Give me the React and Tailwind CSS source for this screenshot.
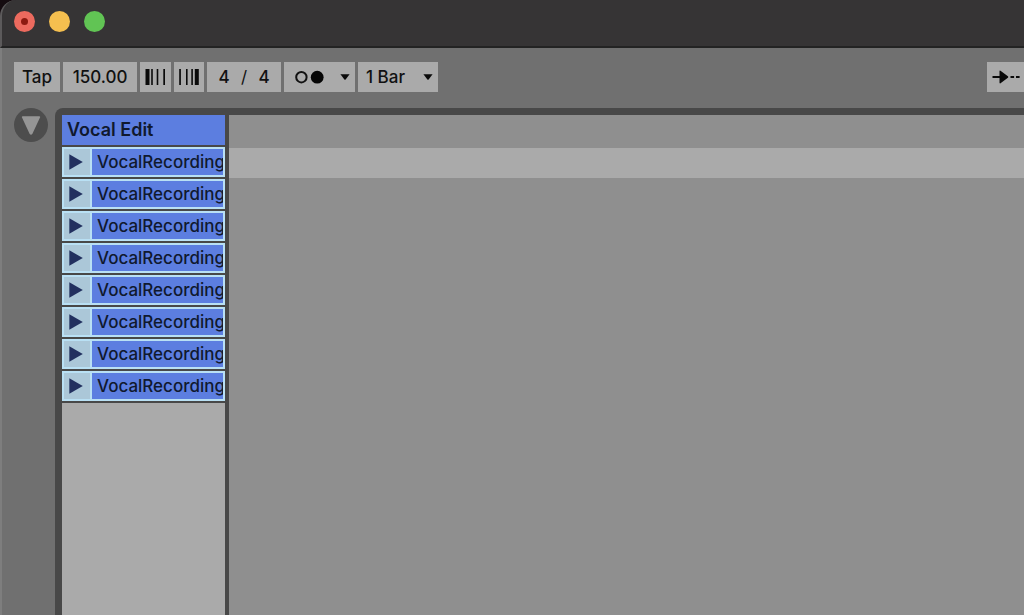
import React, { useState } from "react";

const clips = [1, 2, 3, 4, 5, 6, 7, 8];

const control =
  "h-[30px] shrink-0 bg-[#aaaaaa] text-[#111111] text-[17px] font-medium leading-[30px]";

function Caret() {
  return (
    <svg
      viewBox="0 0 10 6"
      className="pointer-events-none absolute right-[5px] top-3 h-[6px] w-[10px]"
      aria-hidden="true"
    >
      <path d="M0.4 0.2h9.2L5.6 5.4q-0.6 0.6-1.2 0z" fill="#0a0a0a" />
    </svg>
  );
}

function TitleBar() {
  return (
    <header className="flex h-12 shrink-0 items-center gap-[14px] rounded-tl-2xl border-b-2 border-l-2 border-b-[#232323] border-l-[#5c5a5b] bg-[#363435] pl-3 pb-1">
      <button aria-label="Close" className="size-[21px] rounded-full bg-[#ec6a5e] p-[7px]">
        <span className="block size-[7px] rounded-full bg-[#8c1a10]" />
      </button>
      <button aria-label="Minimize" className="size-[21px] rounded-full bg-[#f5bf4f]" />
      <button aria-label="Zoom" className="size-[21px] rounded-full bg-[#61c454]" />
    </header>
  );
}

function Toolbar() {
  const [tempo, setTempo] = useState("150.00");
  const [numerator, setNumerator] = useState("4");
  const [denominator, setDenominator] = useState("4");

  return (
    <div className="flex shrink-0 items-center justify-between pl-3 pt-[14px] pb-4">
      <div className="flex gap-[3px]">
        <button className={`${control} w-[46px]`}>Tap</button>
        <input
          aria-label="Tempo"
          value={tempo}
          onChange={(e) => setTempo(e.target.value)}
          className={`${control} w-[74px] text-center`}
        />

        {/* Nudge down / up */}
        <button aria-label="Nudge down" className={`${control} w-[31px]`}>
          <svg viewBox="0 0 31 30" className="h-[30px] w-[31px]" fill="#0a0a0a">
            <path d="M5.5 7h4v16h-4zM11.2 7h1.6v16h-1.6zM16.7 7h1.6v16h-1.6zM23.3 7h1.7v16h-1.7z" />
          </svg>
        </button>
        <button aria-label="Nudge up" className={`${control} w-[30px]`}>
          <svg viewBox="0 0 30 30" className="size-[30px]" fill="#0a0a0a">
            <path d="M5.2 7h1.7v16h-1.7zM12 7h1.6v16h-1.6zM17.3 7h1.6v16h-1.6zM20.8 7h4v16h-4z" />
          </svg>
        </button>

        {/* Time signature */}
        <div className={`${control} flex w-[74px] items-center justify-center`}>
          <input
            aria-label="Numerator"
            value={numerator}
            onChange={(e) => setNumerator(e.target.value)}
            className="w-5 text-center"
          />
          <span className="w-5 text-center font-normal">/</span>
          <input
            aria-label="Denominator"
            value={denominator}
            onChange={(e) => setDenominator(e.target.value)}
            className="w-5 text-center"
          />
        </div>

        {/* Metronome, its symbol sits over the select */}
        <div className="relative">
          <select
            aria-label="Metronome"
            className="h-[30px] w-[71px] appearance-none bg-[#aaaaaa] text-transparent"
          >
            <option>○●</option>
          </select>
          <svg
            viewBox="0 0 32 16"
            className="pointer-events-none absolute left-[10px] top-[7px] h-4 w-8"
            aria-hidden="true"
          >
            <circle cx="7.4" cy="8.2" r="5.2" fill="none" stroke="#111111" strokeWidth="2" />
            <circle cx="23.2" cy="8.2" r="6.4" fill="#050505" />
          </svg>
          <Caret />
        </div>
        <div className="relative">
          <select
            aria-label="Quantization"
            className={`${control} w-[80px] appearance-none pl-2`}
          >
            <option>1 Bar</option>
          </select>
          <Caret />
        </div>
      </div>

      <button aria-label="Follow" className={`${control} w-[37px]`}>
        <svg viewBox="0 0 37 30" className="h-[30px] w-[37px]" fill="#0a0a0a">
          <path d="M5.5 14h7V9.4q0-1.2 1-0.6l7.4 5.4q0.9 0.8 0 1.6l-7.4 5.4q-1 0.6-1-0.6V16h-7z" />
          <path d="M23.5 14h3.6v2h-3.6zM29 14h3.6v2H29z" />
        </svg>
      </button>
    </div>
  );
}

function Clip() {
  return (
    <li className="flex h-[30px] overflow-hidden border-2 border-[#b9e0f4] bg-[#5c7ee0]">
      <button
        aria-label="Launch clip"
        className="w-[28px] shrink-0 border-r-2 border-[#b9e0f4] bg-[#abc7d8] pl-[5px]"
      >
        <svg viewBox="0 0 14 16" className="h-4 w-[14px]">
          <path d="M0.3 0.3L13.8 8L0.3 15.7z" fill="#22305f" />
        </svg>
      </button>
      <span className="min-w-0 overflow-hidden pl-[5px] leading-[26px] whitespace-nowrap">
        VocalRecording
      </span>
    </li>
  );
}

function Track() {
  return (
    <section className="flex w-[163px] shrink-0 flex-col gap-[2px] text-[17px] font-medium text-[#10192e]">
      <h2 className="h-[30px] bg-[#5c7ee0] pl-[5px] text-[18px] font-semibold leading-[30px]">
        Vocal Edit
      </h2>
      <ul className="flex flex-col gap-[2px]">
        {clips.map((id) => (
          <Clip key={id} />
        ))}
      </ul>
      <div className="flex-1 bg-[#aaaaaa]" />
    </section>
  );
}

export default function App() {
  return (
    <div className="flex h-screen flex-col overflow-hidden bg-[#150c10] font-['Inter',sans-serif]">
      <TitleBar />
      <div className="flex min-h-0 flex-1 flex-col border-l-2 border-[#7e7e7e] bg-[#707070]">
        <Toolbar />
        <main className="flex min-h-0 flex-1">
          <div className="w-[53px] shrink-0 pl-3">
            <button
              aria-label="Show browser"
              className="flex size-[34px] items-center justify-center rounded-full bg-[#4d4d4d]"
            >
              <svg viewBox="0 0 20 20" className="size-5">
                <path
                  d="M1.8 1.2h16.4q1.4 0 0.8 1.4L11.3 19q-1.3 1.6-2.6 0L1 2.6q-0.6-1.4 0.8-1.4z"
                  fill="#959595"
                />
              </svg>
            </button>
          </div>
          <div className="flex min-w-0 flex-1 gap-1 rounded-tl-lg bg-[#484848] pt-[7px] pl-[7px]">
            <Track />
            <div className="flex-1 bg-[#8f8f8f] pt-[33px]">
              <div className="h-[30px] bg-[#aaaaaa]" />
            </div>
          </div>
        </main>
      </div>
    </div>
  );
}
